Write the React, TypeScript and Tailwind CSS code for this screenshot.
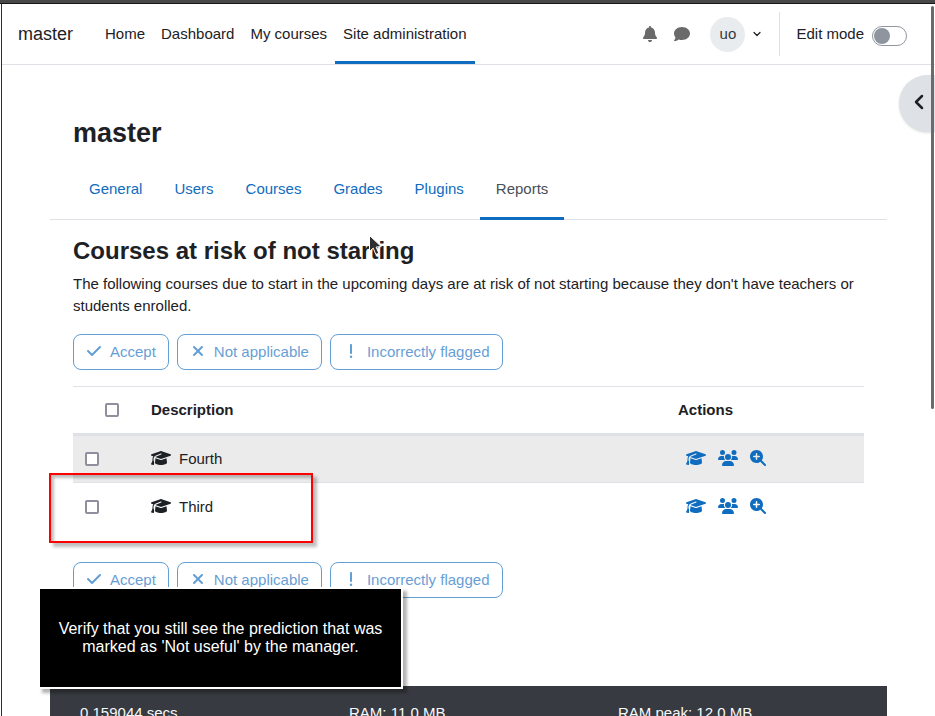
import { useState } from 'react'
import {
  FaBell,
  FaCheck,
  FaComment,
  FaExclamation,
  FaGraduationCap,
  FaMagnifyingGlassPlus,
  FaUsers,
  FaXmark,
} from 'react-icons/fa6'
import { ChevronDown, ChevronLeft } from 'lucide-react'

const NAV = ['Home', 'Dashboard', 'My courses', 'Site administration']
const TABS = ['General', 'Users', 'Courses', 'Grades', 'Plugins', 'Reports']

const BULK_ACTIONS = [
  { label: 'Accept', Icon: FaCheck },
  { label: 'Not applicable', Icon: FaXmark },
  { label: 'Incorrectly flagged', Icon: FaExclamation },
]

const ROW_ACTIONS = [
  { label: 'View course', Icon: FaGraduationCap, size: 'w-5 h-4' },
  { label: 'Participants', Icon: FaUsers, size: 'w-5 h-4' },
  { label: 'View details', Icon: FaMagnifyingGlassPlus, size: 'w-4 h-4' },
]

const COURSES = ['Fourth', 'Third']
const STATS = ['0.159044 secs', 'RAM: 11.0 MB', 'RAM peak: 12.0 MB']

function Checkbox({ label, checked, onChange }: { label: string; checked: boolean; onChange: () => void }) {
  return (
    <input
      type="checkbox"
      aria-label={label}
      checked={checked}
      onChange={onChange}
      className="block w-3.5 h-3.5 appearance-none rounded-xs border-2 border-[#8f8f9d] bg-white checked:bg-[#0f6cbf]"
    />
  )
}

function BulkActions() {
  return (
    <div className="flex gap-2">
      {BULK_ACTIONS.map(({ label, Icon }) => (
        <button
          key={label}
          disabled
          className="flex items-center gap-2 h-9 px-3 rounded-lg border border-[#0f6cbf] text-[#0f6cbf] opacity-65 whitespace-nowrap"
        >
          <span className="w-4 mb-0.5 flex justify-center">
            <Icon size={16} />
          </span>
          {label}
        </button>
      ))}
    </div>
  )
}

function Header() {
  const [editing, setEditing] = useState(false)

  return (
    <header className="flex items-stretch h-[61px] pl-4 pr-7 border-b border-[#dee2e6]">
      <a href="#" className="flex items-center mr-6 text-lg">master</a>
      <nav className="flex">
        {NAV.map((item, i) => (
          <a
            key={item}
            href="#"
            className={
              i === 3
                ? 'flex items-center px-2 border-y-3 border-t-transparent border-b-[#0f6cbf]'
                : 'flex items-center px-2 border-y-3 border-transparent'
            }
          >
            {item}
          </a>
        ))}
      </nav>

      <div className="flex items-center ml-auto">
        <button aria-label="Notifications" className="px-2 text-[#6a6a6a]"><FaBell size={16} /></button>
        <button aria-label="Messages" className="px-2 text-[#6a6a6a]"><FaComment size={16} /></button>
        <button aria-label="User menu" className="flex items-center gap-1.5 ml-3 mr-4">
          <span className="flex items-center justify-center w-[35px] h-[35px] rounded-full bg-[#e9ecef] text-[#343a40]">uo</span>
          <ChevronDown size={12} strokeWidth={2.5} />
        </button>
        <label className="flex items-center gap-2 h-11 pl-4 border-l border-[#dee2e6]">
          Edit mode
          <input
            type="checkbox"
            role="switch"
            checked={editing}
            onChange={() => setEditing(!editing)}
            className="mt-1 w-[35px] h-5 appearance-none rounded-full border border-[#8f959e] before:block before:w-4 before:h-4 before:m-px before:rounded-full before:bg-[#8f959e] checked:before:ml-4"
          />
        </label>
      </div>
    </header>
  )
}

function CourseTable() {
  const [selected, setSelected] = useState<string[]>([])
  const allSelected = selected.length === COURSES.length

  const toggle = (name: string) =>
    setSelected(selected.includes(name) ? selected.filter(n => n !== name) : [...selected, name])

  return (
    <table className="w-full table-fixed border-collapse text-left">
      <colgroup>
        <col className="w-[66px]" />
        <col />
        <col className="w-[198px]" />
      </colgroup>
      <thead>
        <tr className="h-12 border-t border-b-3 border-[#dee2e6]">
          <th className="pl-8">
            <Checkbox label="Select all" checked={allSelected} onChange={() => setSelected(allSelected ? [] : COURSES)} />
          </th>
          <th className="px-3">Description</th>
          <th className="px-3">Actions</th>
        </tr>
      </thead>
      <tbody>
        {COURSES.map(name => (
          <tr key={name} className="h-12 border-b border-[#dee2e6] last:border-b-0 odd:bg-[#ebebeb]">
            <td className="px-3">
              <Checkbox label={name} checked={selected.includes(name)} onChange={() => toggle(name)} />
            </td>
            <td className="px-3">
              <div className="flex items-center gap-2">
                <FaGraduationCap className="w-5 h-4 mb-0.5" />
                {name}
              </div>
            </td>
            <td className="pl-5">
              <div className="flex items-center gap-3 mb-0.5 text-[#0f6cbf]">
                {ROW_ACTIONS.map(({ label, Icon, size }) => (
                  <a key={label} href="#" aria-label={label}>
                    <Icon className={size} />
                  </a>
                ))}
              </div>
            </td>
          </tr>
        ))}
      </tbody>
    </table>
  )
}

export default function App() {
  return (
    <div className="relative flex flex-col h-screen overflow-hidden bg-white text-[#1d2125] text-[15px] leading-[22px] font-['Liberation_Sans',Arial,sans-serif]">
      {/* Window edge */}
      <div className="h-1 shrink-0 bg-[#484848] border-b border-[#161616]" />

      <div className="flex-1 ml-px border-l border-[#2e2e2e]">
        <Header />

        <main className="mx-12">
          <h1 className="px-[23px] pt-[50px] text-[27px] leading-9 font-bold">master</h1>

          <nav className="flex h-[62px] mt-[7px] px-[23px] border-b border-[#dee2e6]">
            {TABS.map((tab, i) => (
              <a
                key={tab}
                href="#"
                className={
                  i === 5
                    ? '-mb-px px-4 pt-5 border-b-3 border-[#0f6cbf] text-[#495057]'
                    : 'px-4 pt-5 text-[#0f6cbf]'
                }
              >
                {tab}
              </a>
            ))}
          </nav>

          <div className="px-[23px] pt-4">
            <h2 className="text-2xl leading-[30px] font-bold">Courses at risk of not starting</h2>
            <p className="mt-[7px] mb-[17px]">
              The following courses due to start in the upcoming days are at risk of not starting because they don't
              have teachers or students enrolled.
            </p>
            <BulkActions />
            <div className="mt-4 mb-[31px]">
              <CourseTable />
            </div>
            <BulkActions />
          </div>

          <footer className="grid grid-cols-3 mt-[88px] pl-[30px] pt-4 pb-8 bg-[#373a40] text-[#f8f9fa]">
            {STATS.map(stat => (
              <span key={stat}>{stat}</span>
            ))}
          </footer>
        </main>
      </div>

      {/* Block drawer toggle */}
      <button
        aria-label="Open block drawer"
        className="absolute right-0 top-[75px] flex items-center w-9 h-[57px] pl-2 pb-1 rounded-l-full bg-[#dee2e6] shadow-sm"
      >
        <ChevronLeft size={24} strokeWidth={2.5} />
      </button>

      {/* Scroll thumb */}
      <div className="absolute right-px top-1.5 w-[3px] h-[403px] rounded-full bg-[#6b6b6b]" />

      {/* Highlighted prediction */}
      <div className="absolute left-[49px] top-[473px] w-[264px] h-[70px] border-2 border-[#ff0000] shadow-[4px_4px_3px_rgba(0,0,0,0.25),inset_3px_3px_3px_rgba(0,0,0,0.25)]" />

      {/* Step caption */}
      <div className="absolute left-[38px] top-[587px] flex items-center justify-center w-[365px] h-[102px] border-2 border-white bg-black text-white text-base leading-[18px] text-center shadow-[4px_4px_3px_rgba(0,0,0,0.3)]">
        <p>
          Verify that you still see the prediction that was
          <br />
          marked as 'Not useful' by the manager.
        </p>
      </div>

      {/* Mouse pointer */}
      <svg className="absolute left-[368px] top-[234px]" width="15" height="23" viewBox="0 0 15 23">
        <path d="M1.5 1.5v16l3.7-3.4 2.6 6.3 3-1.2-2.7-6.1 5.2-.5z" fill="#2e2e2e" stroke="#fff" strokeWidth="1" />
      </svg>
    </div>
  )
}
